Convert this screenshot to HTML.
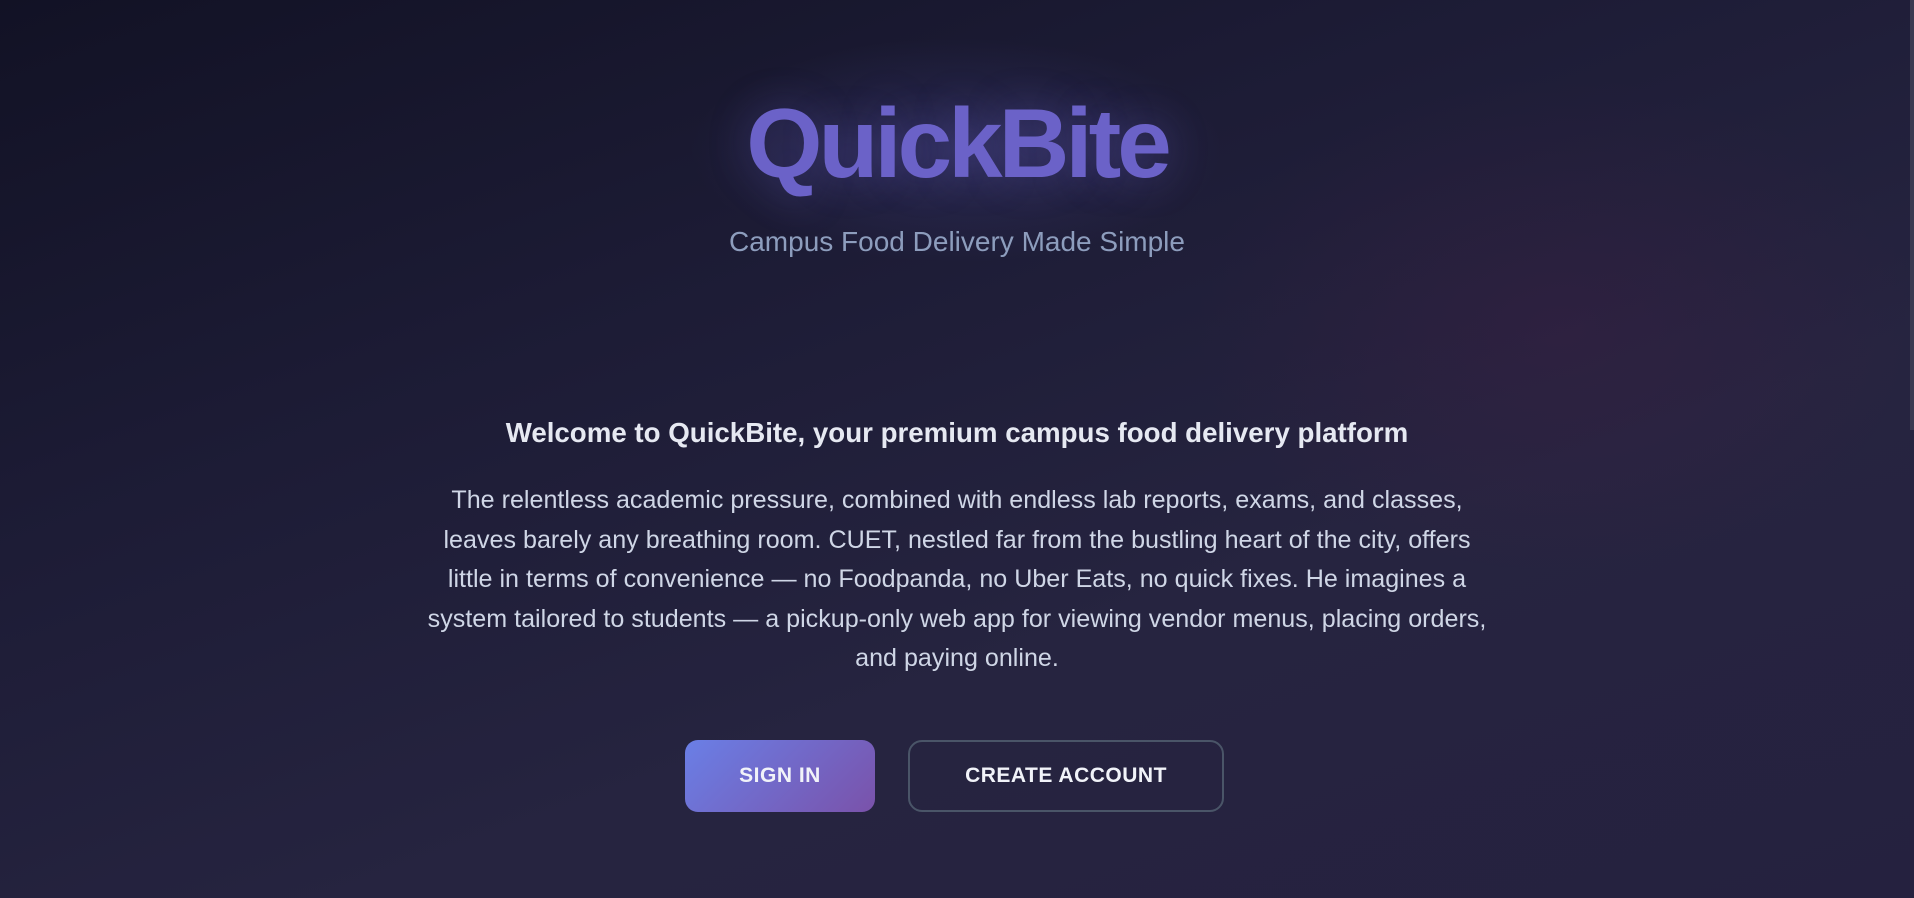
<!DOCTYPE html>
<html><head><meta charset="utf-8"><style>
html,body{margin:0;padding:0;width:1914px;height:898px;overflow:hidden}
body{font-family:"Liberation Sans",sans-serif;color:#e2e8f0;
background:
radial-gradient(ellipse 520px 360px at 1560px 330px,rgba(70,30,70,.3),transparent 70%),
radial-gradient(ellipse 380px 160px at 956px 150px,rgba(70,70,140,.35),transparent 70%),
linear-gradient(160deg,#121225 0%,#1d1c36 35%,#262440 65%,#25213f 100%);position:relative}
.t{position:absolute;left:0;width:1914px;text-align:center}
h1{margin:0;top:87px;font-size:98px;font-weight:700;letter-spacing:-4px;color:#6b62c8;text-shadow:0 0 40px rgba(107,98,200,.35)}
.sub{top:226px;font-size:28px;color:#8d9dbd}
.h{top:417px;font-size:27.7px;font-weight:700;color:#e6e9f2}
.p{top:481px;font-size:25.1px;line-height:39.5px;color:#cfd6e6;white-space:nowrap}
.b{position:absolute;top:740px;height:72px;box-sizing:border-box;display:flex;align-items:center;justify-content:center;font-size:21px;font-weight:700;letter-spacing:.5px;color:#f1f3f9}
.s{left:685px;width:190px;border-radius:13px;background:linear-gradient(135deg,#6a7fe6,#7a52aa)}
.c{left:908px;width:316px;border-radius:14px;border:2px solid #4a5568}
.sb{position:absolute;right:0;top:0;width:4px;height:430px;background:#3a3a50}
</style></head><body>
<h1 class="t">QuickBite</h1>
<div class="t sub">Campus Food Delivery Made Simple</div>
<div class="t h">Welcome to QuickBite, your premium campus food delivery platform</div>
<div class="t p">The relentless academic pressure, combined with endless lab reports, exams, and classes,<br>leaves barely any breathing room. CUET, nestled far from the bustling heart of the city, offers<br>little in terms of convenience — no Foodpanda, no Uber Eats, no quick fixes. He imagines a<br>system tailored to students — a pickup-only web app for viewing vendor menus, placing orders,<br>and paying online.</div>
<div class="b s">SIGN IN</div>
<div class="b c">CREATE ACCOUNT</div>
<div class="sb"></div>
</body></html>
